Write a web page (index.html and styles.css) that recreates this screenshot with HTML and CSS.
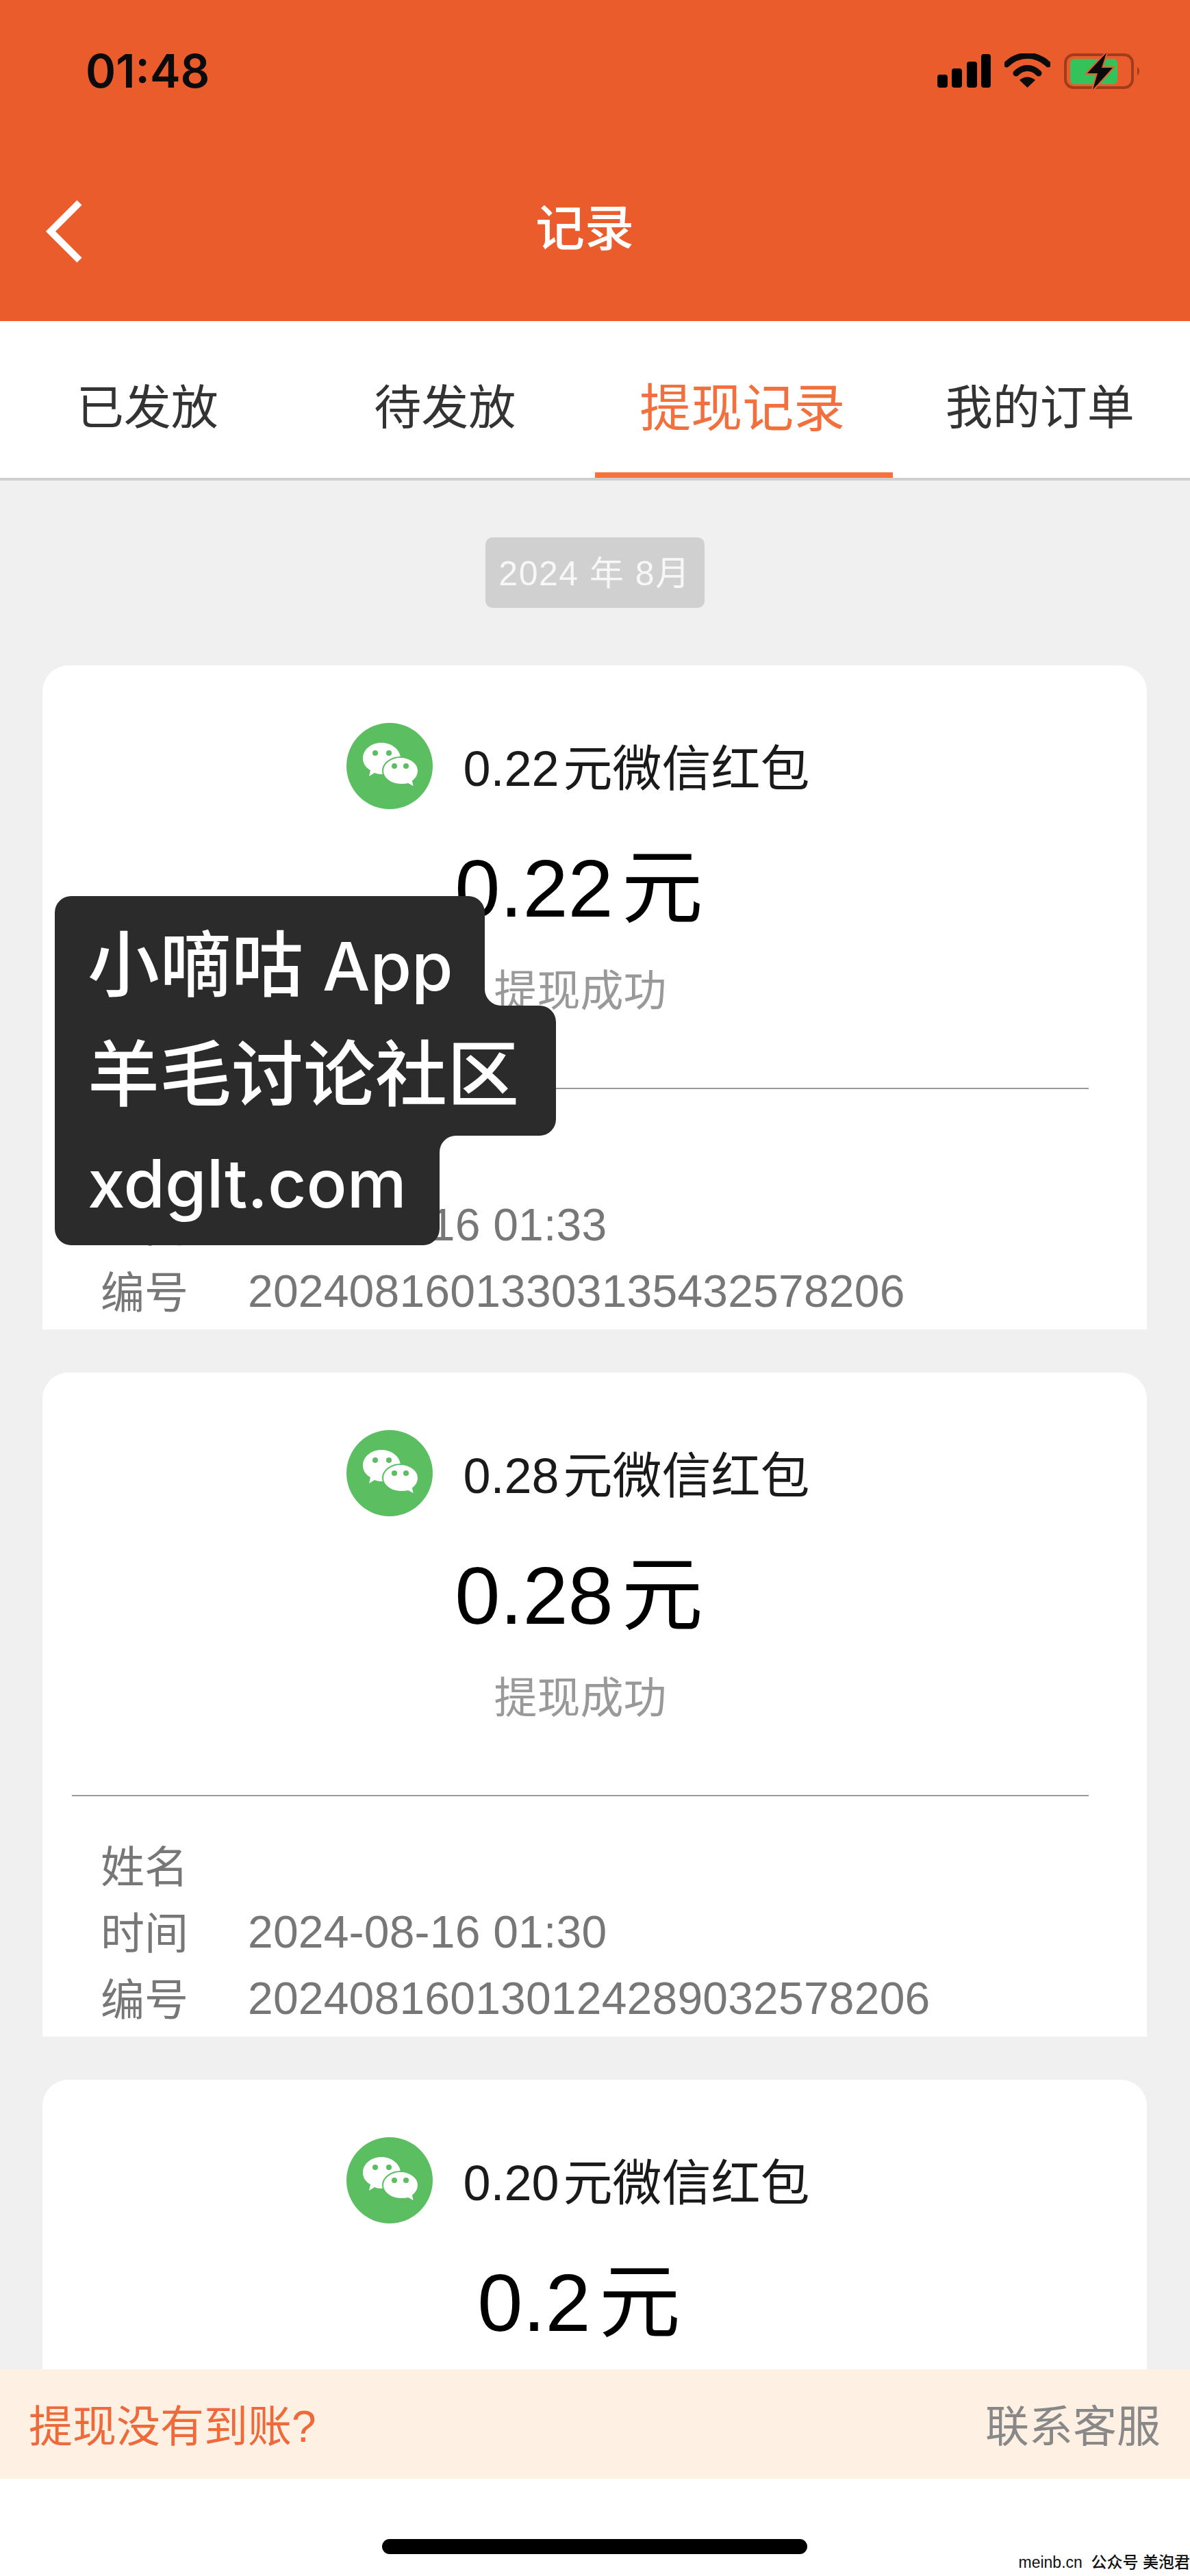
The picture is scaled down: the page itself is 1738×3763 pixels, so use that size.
FILE: index.html
```html
<!DOCTYPE html>
<html lang="zh-CN">
<head>
  <meta charset="UTF-8" />
  <title>记录</title>
  <link rel="stylesheet" href="styles.css">
</head>
<body>
  <div class="page">
    <header class="top">
      <div class="status">
        <span class="clock">01:48</span>
        <div class="status-icons">
          <svg class="signal" width="78" height="49" viewBox="0 0 78 49">
            <rect x="0" y="30" width="15" height="19" rx="4"/>
            <rect x="21" y="21" width="15" height="28" rx="4"/>
            <rect x="43" y="11" width="15" height="38" rx="4"/>
            <rect x="64" y="0" width="14" height="49" rx="4"/>
          </svg>
          <svg class="wifi" width="67" height="50" viewBox="0 0 67 50">
            <path d="M3 16C21 -1 46 -1 64 16" fill="none" stroke="#0b0b0b" stroke-width="9" stroke-linecap="round"/>
            <path d="M17 29C27 19 40 19 50 29" fill="none" stroke="#0b0b0b" stroke-width="9" stroke-linecap="round"/>
            <path d="M22 39C29 33 38 33 45 39L33.500 50Z" fill="#0b0b0b"/>
          </svg>
          <svg class="battery" width="112" height="54" viewBox="0 0 112 54">
            <rect x="2" y="3" width="98" height="48" rx="12" fill="none" stroke="#a13d1c" stroke-width="4"/>
            <rect x="9" y="9" width="69" height="37" rx="6" fill="#34c35a"/>
            <path d="M107 21C111 23 111 31 107 33Z" fill="#a13d1c"/>
            <path d="M62 0L34 30H49L42 54L71 22H55Z" fill="#0b0b0b" stroke="#ea5c2c" stroke-width="4" paint-order="stroke"/>
          </svg>
        </div>
      </div>
      <nav class="navbar">
        <svg class="back" width="60" height="92" viewBox="0 0 60 92">
          <path d="M52 4L10 46L52 88" fill="none" stroke="#fff" stroke-width="10"/>
        </svg>
        <span class="nav-title">记录</span>
      </nav>
    </header>

    <div class="tabs">
      <div class="tab">已发放</div>
      <div class="tab">待发放</div>
      <div class="tab tab-active">提现记录</div>
      <div class="tab">我的订单</div>
    </div>

    <main class="list">
      <div class="date-chip">2024 年 8月</div>

      <section class="card">
        <div class="card-title">
          <svg class="wechat" width="126" height="126" viewBox="0 0 126 126">
            <use href="#wechat-icon"/>
          </svg>
          <span class="title-text">0.22<span class="unit">元</span>微信红包</span>
        </div>
        <div class="amount">0.22<span class="amount-unit">元</span></div>
        <div class="state">提现成功</div>
        <div class="divider"></div>
        <div class="row"><span class="row-label">姓名</span></div>
        <div class="row"><span class="row-label">时间</span><span class="row-value">2024-08-16 01:33</span></div>
        <div class="row"><span class="row-label">编号</span><span class="row-value">20240816013303135432578206</span></div>
      </section>

      <section class="card">
        <div class="card-title">
          <svg class="wechat" width="126" height="126" viewBox="0 0 126 126">
            <use href="#wechat-icon"/>
          </svg>
          <span class="title-text">0.28<span class="unit">元</span>微信红包</span>
        </div>
        <div class="amount">0.28<span class="amount-unit">元</span></div>
        <div class="state">提现成功</div>
        <div class="divider"></div>
        <div class="row"><span class="row-label">姓名</span></div>
        <div class="row"><span class="row-label">时间</span><span class="row-value">2024-08-16 01:30</span></div>
        <div class="row"><span class="row-label">编号</span><span class="row-value">202408160130124289032578206</span></div>
      </section>

      <section class="card">
        <div class="card-title">
          <svg class="wechat" width="126" height="126" viewBox="0 0 126 126">
            <use href="#wechat-icon"/>
          </svg>
          <span class="title-text">0.20<span class="unit">元</span>微信红包</span>
        </div>
        <div class="amount">0.2<span class="amount-unit">元</span></div>
      </section>
    </main>

    <div class="help-bar">
      <span class="help-text">提现没有到账?</span>
      <span class="help-link">联系客服</span>
    </div>

    <div class="home-area">
      <div class="home-bar"></div>
    </div>

    <div class="tag">
      <svg class="tag-bg" width="732" height="510" viewBox="0 0 732 510">
        <path d="M24 0H604a24 24 0 0 1 24 24V136a24 24 0 0 0 24 24H708a24 24 0 0 1 24 24V326a24 24 0 0 1 -24 24H586a24 24 0 0 0 -24 24V486a24 24 0 0 1 -24 24H24a24 24 0 0 1 -24 -24V24a24 24 0 0 1 24 -24Z" fill="#2b2b2b"/>
      </svg>
      <div class="tag-line">小嘀咕 <span class="tag-latin">App</span></div>
      <div class="tag-line">羊毛讨论社区</div>
      <div class="tag-line tag-latin">xdglt.com</div>
    </div>

    <div class="credit">meinb.cn&nbsp; 公众号 美泡君</div>
  </div>

  <svg class="icon-defs" width="0" height="0">
    <symbol id="wechat-icon" viewBox="0 0 126 126">
      <circle cx="63" cy="63" r="63" fill="#5bbf62"/>
      <path d="M51 29C66 29 79 39 79 52C79 65 66 75 51 75C47 75 44 74 41 73L33 78L35 69C28 65 24 59 24 52C24 39 36 29 51 29Z" fill="#fff"/>
      <circle cx="42" cy="44" r="4" fill="#5bbf62"/>
      <circle cx="62" cy="44" r="4" fill="#5bbf62"/>
      <path d="M79 50C93 50 105 59 105 70C105 76 102 81 97 85L99 94L90 89C87 90 83 90 79 90C65 90 53 81 53 70C53 59 65 50 79 50Z" fill="#fff" stroke="#5bbf62" stroke-width="2"/>
      <circle cx="70" cy="63" r="4" fill="#5bbf62"/>
      <circle cx="87" cy="63" r="4" fill="#5bbf62"/>
    </symbol>
  </svg>
</body>
</html>
```

FILE: styles.css
```css
* {
  box-sizing: border-box;
}

body {
  margin: 0;
  font-family: "Liberation Sans", "Noto Sans CJK SC", sans-serif;
  background-color: #fff;
  color: #000;
}

.page {
  position: relative;
  width: 1738px;
  height: 3763px;
  overflow: hidden;
  display: flex;
  flex-direction: column;
}

.top {
  height: 469px;
  background-color: #ea5c2c;
}

.status {
  height: 208px;
  padding: 0 72px 0 125px;
  display: flex;
  justify-content: space-between;
  align-items: flex-start;
}

.clock {
  margin-top: 64px;
  font-family: Inter, "Liberation Sans", sans-serif;
  font-size: 67px;
  line-height: 80px;
  font-weight: 600;
  color: #0b0b0b;
}

.status-icons {
  margin-top: 77px;
  display: flex;
  align-items: flex-start;
}

.signal {
  margin-top: 2px;
  margin-right: 20px;
}

.wifi {
  margin-top: 1px;
  margin-right: 20px;
}

.navbar {
  height: 252px;
  padding-right: 30px;
  position: relative;
  display: flex;
  align-items: flex-start;
  justify-content: center;
}

.back {
  position: absolute;
  left: 64px;
  top: 84px;
}

.nav-title {
  margin-top: 80px;
  font-size: 72px;
  line-height: 92px;
  font-weight: 500;
  color: #fff;
}

.tabs {
  height: 233px;
  background-color: #fff;
  border-bottom: 4px solid #cfcfcf;
  display: grid;
  grid-template-columns: repeat(4, 1fr);
}

.tab {
  height: 229px;
  padding: 82px 4px 0 0;
  text-align: center;
  font-size: 69px;
  line-height: 92px;
  color: #333;
}

.tab-active {
  font-size: 75px;
  color: #f2703e;
  border-bottom: 8px solid #f7723d;
}

.list {
  flex: 1;
  min-height: 0;
  overflow: hidden;
  background-color: #f0f0f0;
  padding: 83px 63px 0 62px;
  display: flex;
  flex-direction: column;
  align-items: center;
  gap: 63px;
}

.date-chip {
  width: 320px;
  height: 103px;
  margin-bottom: 21px;
  padding-top: 2px;
  flex-shrink: 0;
  background-color: #d0d0d0;
  border-radius: 10px;
  color: #f7f7f7;
  font-size: 50px;
  line-height: 103px;
  letter-spacing: 1.5px;
  text-align: center;
}

.card {
  width: 100%;
  height: 970px;
  flex-shrink: 0;
  background-color: #fff;
  border-radius: 38px 38px 0 0;
  padding: 84px 85px 0 43px;
}

.card-title {
  height: 126px;
  padding-right: 6px;
  display: flex;
  align-items: center;
  justify-content: center;
  gap: 44px;
  font-size: 72px;
  color: #1a1a1a;
}

.title-text {
  margin-bottom: 6px;
}

.unit {
  margin-left: 6px;
}

.amount {
  margin-top: 48px;
  padding-right: 4px;
  text-align: center;
  font-size: 119px;
  line-height: 136px;
}

.amount-unit {
  margin-left: 12px;
}

.state {
  margin-top: 41px;
  text-align: center;
  font-size: 63px;
  line-height: 80px;
  color: #999;
}

.divider {
  margin-top: 102px;
  margin-bottom: 52px;
  height: 2px;
  background-color: #999;
}

.row {
  height: 97px;
  padding-left: 42px;
  display: flex;
  align-items: center;
  font-size: 64px;
  color: #777;
}

.row-label {
  width: 215px;
  margin-bottom: 5px;
}

.row-value {
  font-size: 66px;
  letter-spacing: 0.2px;
}

.help-bar {
  height: 160px;
  padding: 0 43px 4px 42px;
  background-color: #fff0e4;
  display: flex;
  justify-content: space-between;
  align-items: center;
  font-size: 64px;
}

.help-text {
  color: #ee6a3a;
}

.help-link {
  color: #888;
}

.home-area {
  height: 142px;
  padding-top: 88px;
  background-color: #fff;
}

.home-bar {
  width: 621px;
  height: 22px;
  margin-left: 558px;
  border-radius: 11px;
  background-color: #000;
}

.tag {
  position: absolute;
  left: 80px;
  top: 1309px;
  width: 732px;
  height: 510px;
  padding: 20px 0 0 48px;
  color: #fff;
  font-family: Inter, "Noto Sans CJK SC", sans-serif;
  font-size: 105px;
  font-weight: 500;
}

.tag-bg {
  position: absolute;
  left: 0;
  top: 0;
}

.tag-line {
  position: relative;
  height: 160px;
  line-height: 160px;
  white-space: nowrap;
}

.tag-latin {
  font-size: 98px;
}

.credit {
  position: absolute;
  right: 0;
  top: 3728px;
  font-size: 23px;
  line-height: 30px;
  font-weight: 500;
  color: #111;
  white-space: nowrap;
}

.icon-defs {
  position: absolute;
}
```
